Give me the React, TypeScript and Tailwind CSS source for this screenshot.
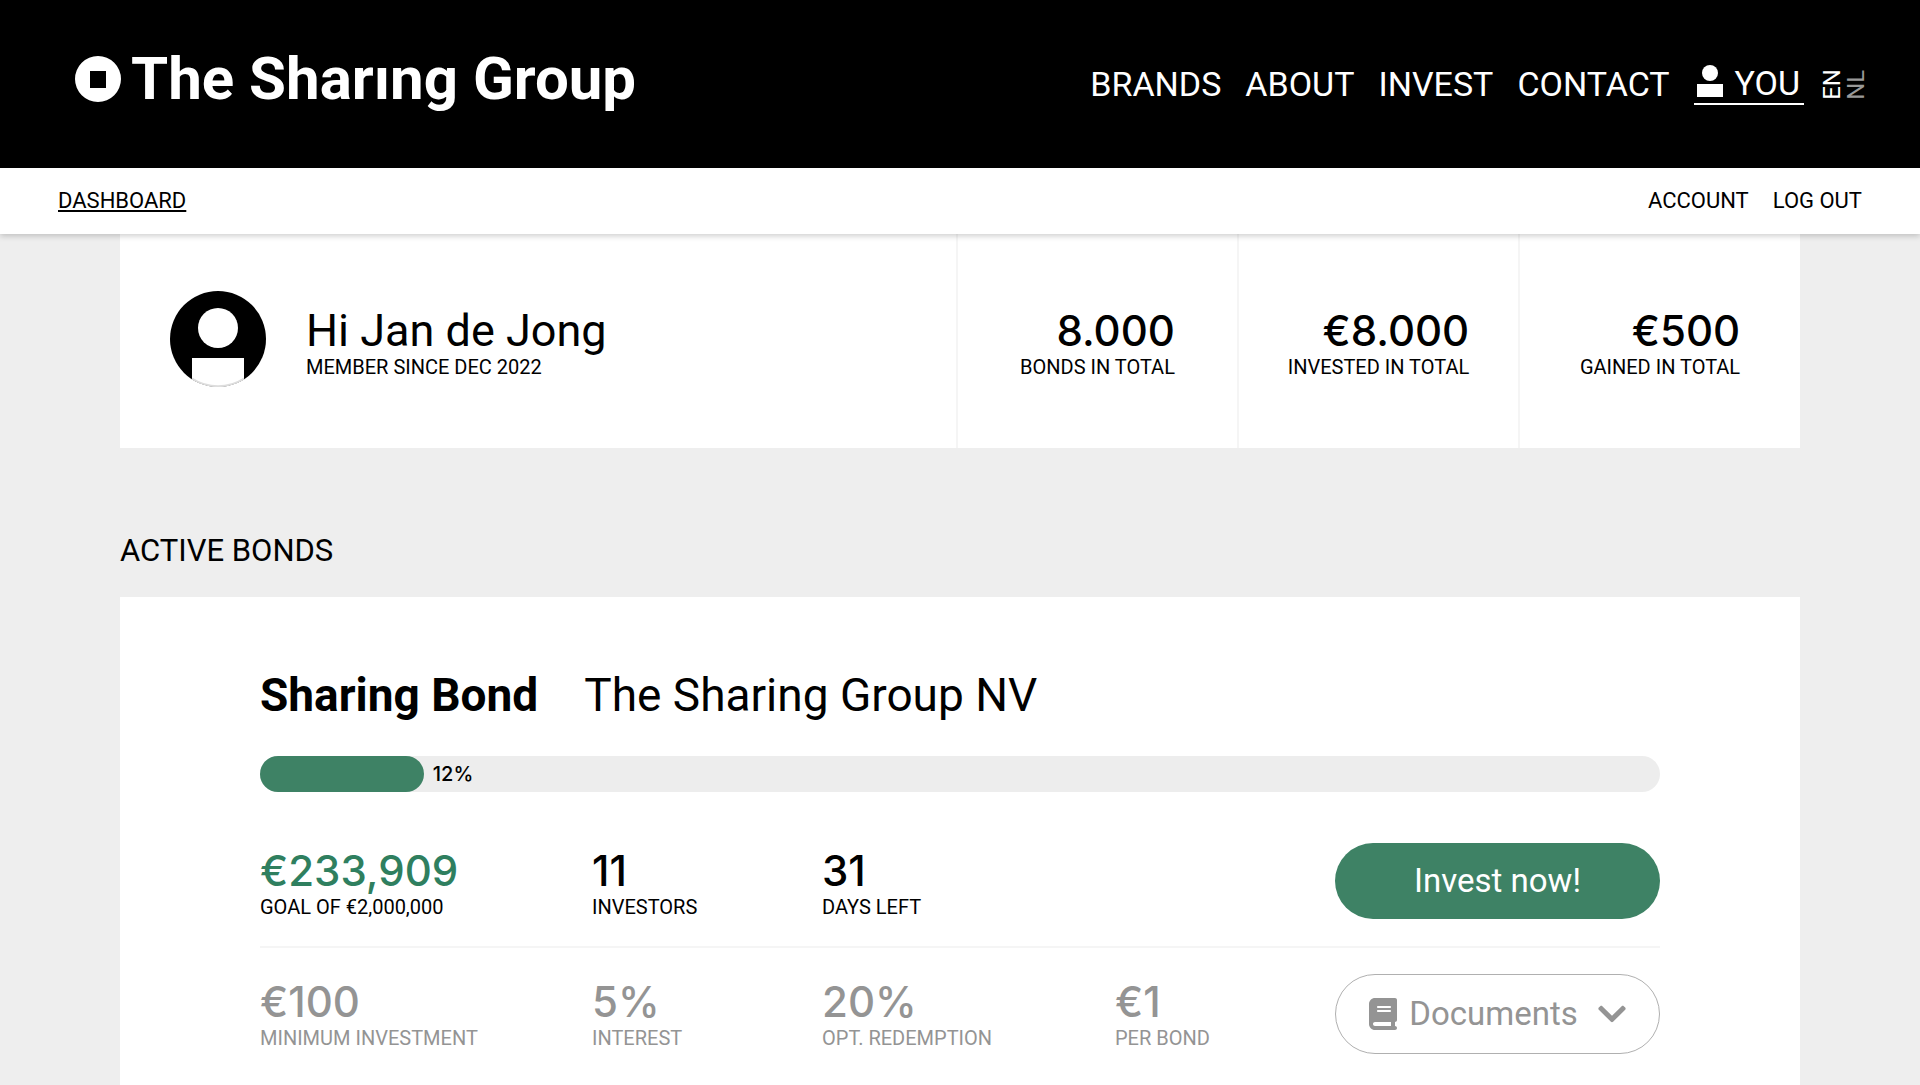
import { FaBook } from "react-icons/fa6";
import { FaChevronDown } from "react-icons/fa";

type StatProps = {
  value: string;
  label: string;
  className?: string;
  valueClassName?: string;
};

const navLinks = ["BRANDS", "ABOUT", "INVEST", "CONTACT"];

const totals = [
  { value: "8.000", label: "BONDS IN TOTAL" },
  { value: "€8.000", label: "INVESTED IN TOTAL" },
  { value: "€500", label: "GAINED IN TOTAL" },
];

function Stat({ value, label, className = "", valueClassName = "" }: StatProps) {
  return (
    <div className={`whitespace-nowrap ${className}`}>
      <p className={`font-[Inter,sans-serif] text-[42px] leading-[48px] font-medium ${valueClassName}`}>
        {value}
      </p>
      <p className="text-[20px] leading-6">{label}</p>
    </div>
  );
}

function Logo() {
  return (
    <a href="#" className="mb-2.5 flex items-center gap-2.5 whitespace-nowrap">
      <svg viewBox="0 0 46 46" className="size-[46px]" aria-hidden="true">
        <path fill="#fff" fillRule="evenodd" d="M23 0a23 23 0 1 0 0 46a23 23 0 1 0 0-46zM15 15h16v17H15z" />
      </svg>
      <span className="text-[60px] leading-[72px] font-bold">The Sharıng Group</span>
    </a>
  );
}

function Header() {
  return (
    <header className="relative z-10">
      <div className="flex h-[168px] items-center justify-between bg-black pr-[52px] pl-[75px] text-white">
        <Logo />
        <nav className="flex items-center gap-6 text-[34px] leading-10 whitespace-nowrap">
          {navLinks.map((link) => (
            <a key={link} href="#">
              {link}
            </a>
          ))}
          <a href="#" className="flex items-center gap-3 border-b-2 border-white pr-1 pl-[3px]">
            <svg viewBox="0 0 26 32" className="mb-1 h-8 w-[26px]" aria-hidden="true">
              <circle cx="13" cy="8" r="8" fill="#fff" />
              <path fill="#fff" d="M0 19h26v13H0z" />
            </svg>
            YOU
          </a>
          <div className="-ml-2 flex text-[24px] leading-6">
            <a href="#" className="rotate-180 [writing-mode:vertical-rl]">
              EN
            </a>
            <a href="#" className="rotate-180 text-[#999] [writing-mode:vertical-rl]">
              NL
            </a>
          </div>
        </nav>
      </div>
      <div className="flex h-[66px] items-center justify-between bg-white px-[58px] text-[22px] leading-6 shadow-[0_2px_6px_rgba(0,0,0,0.2)]">
        <a href="#" className="underline decoration-2 underline-offset-2">
          DASHBOARD
        </a>
        <div className="flex gap-6">
          <a href="#">ACCOUNT</a>
          <a href="#">LOG OUT</a>
        </div>
      </div>
    </header>
  );
}

function Avatar() {
  return (
    <svg viewBox="0 0 96 96" className="size-24 shrink-0" role="img" aria-label="Profile">
      <defs>
        <clipPath id="avatar">
          <circle cx="48" cy="48" r="48" />
        </clipPath>
      </defs>
      <g clipPath="url(#avatar)">
        <path d="M0 0h96v96H0z" />
        <circle cx="48" cy="37" r="20" fill="#fff" />
        <path fill="#fff" d="M22 67h52v29H22z" />
        <path fill="none" stroke="#ddd" strokeWidth="2" d="M22 87.500A47.500 47.500 0 0 0 74 87.500" />
      </g>
    </svg>
  );
}

function Summary() {
  return (
    <section className="-mt-1 grid grid-cols-[836fr_281fr_281fr_282fr] bg-white">
      <div className="flex items-center gap-10 py-[61px] pl-[50px]">
        <Avatar />
        <div className="mt-2 whitespace-nowrap">
          <h1 className="text-[45px] leading-[48px]">Hi Jan de Jong</h1>
          <p className="text-[20px] leading-6">MEMBER SINCE DEC 2022</p>
        </div>
      </div>
      {totals.map((total) => (
        <div key={total.label} className="flex items-center justify-center border-l-2 border-[#f5f5f5]">
          <Stat {...total} className="mt-2 text-right" />
        </div>
      ))}
    </section>
  );
}

function BondCard({ progress }: { progress: number }) {
  return (
    <section className="bg-white px-[140px] pt-[70px] pb-16">
      <div className="flex gap-[46px] text-[46px] leading-[56px] whitespace-nowrap">
        <h3 className="font-bold">Sharing Bond</h3>
        <p>The Sharing Group NV</p>
      </div>
      <div className="mt-[33px] flex h-9 items-center gap-[9px] rounded-full bg-[#ededed]">
        <div className="h-full rounded-full bg-[#3e8265]" style={{ width: `${progress}%` }} />
        <span className="font-[Inter,sans-serif] text-[20px] font-medium">12%</span>
      </div>
      <div className="mt-[51px] grid grid-cols-[332fr_230fr_293fr_220fr_325fr] items-end border-b-2 border-[#f5f5f5] pb-[27px]">
        <Stat value="€233,909" label="GOAL OF €2,000,000" valueClassName="text-[#2f7f5f]" />
        <Stat value="11" label="INVESTORS" />
        <Stat value="31" label="DAYS LEFT" />
        <button
          type="button"
          className="col-start-5 h-[76px] rounded-full bg-[#3e8265] text-[33px] whitespace-nowrap text-white"
        >
          Invest now!
        </button>
      </div>
      <div className="grid grid-cols-[332fr_230fr_293fr_220fr_325fr] items-center pt-[26px] text-[#949494]">
        <Stat value="€100" label="MINIMUM INVESTMENT" />
        <Stat value="5%" label="INTEREST" />
        <Stat value="20%" label="OPT. REDEMPTION" />
        <Stat value="€1" label="PER BOND" />
        <button
          type="button"
          className="flex h-20 items-center justify-center rounded-full border border-[#b0b0b0] text-[33px] whitespace-nowrap"
        >
          <FaBook className="mr-3 h-8 w-7" />
          Documents
          <FaChevronDown className="ml-5 h-8 w-7" />
        </button>
      </div>
    </section>
  );
}

export default function App() {
  return (
    <div className="min-h-screen bg-[#eee] font-[Roboto,sans-serif] text-black">
      <Header />
      <main className="px-[120px]">
        <Summary />
        <h2 className="pt-[83px] pb-[26px] text-[31px] leading-10">ACTIVE BONDS</h2>
        <BondCard progress={11.7} />
      </main>
    </div>
  );
}
